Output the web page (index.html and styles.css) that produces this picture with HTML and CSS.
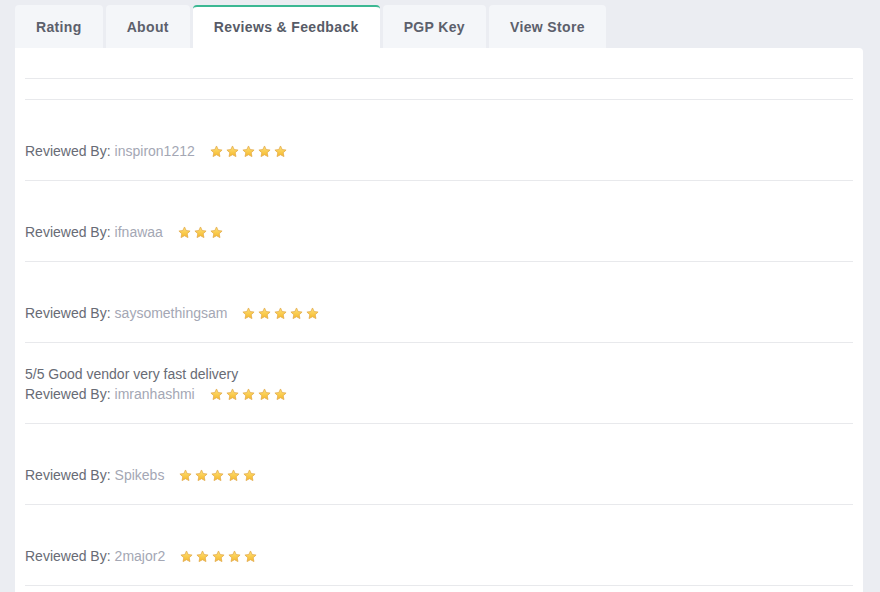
FILE: index.html
```html
<!DOCTYPE html>
<html>
<head>
<meta charset="utf-8">
<link rel="stylesheet" href="styles.css">
</head>
<body>
<svg width="0" height="0" class="defs">
  <defs>
    <linearGradient id="sg" x1="0" y1="0" x2="0" y2="1">
      <stop offset="0" stop-color="#ffe27a"/>
      <stop offset="1" stop-color="#f5b82a"/>
    </linearGradient>
    <symbol id="star" viewBox="0 0 24 24">
      <path d="M12 1.8l3.1 6.6 7.2.9-5.3 5 1.4 7.1L12 17.9l-6.4 3.5 1.4-7.1-5.3-5 7.2-.9z" fill="url(#sg)" stroke="#e2a94a" stroke-width="1.4" stroke-linejoin="round"/>
    </symbol>
  </defs>
</svg>
<div class="wrap">
  <div class="tabs">
    <div class="tab">Rating</div>
    <div class="tab">About</div>
    <div class="tab active">Reviews &amp; Feedback</div>
    <div class="tab">PGP Key</div>
    <div class="tab">View Store</div>
  </div>
  <div class="panel">
    <div class="head"></div>
    <div class="row empty"></div>
    <div class="review">
      <div class="comment">&nbsp;</div>
      <div class="by">Reviewed By: <span class="user">inspiron1212</span><span class="stars"><svg><use href="#star"/></svg><svg><use href="#star"/></svg><svg><use href="#star"/></svg><svg><use href="#star"/></svg><svg><use href="#star"/></svg></span></div>
    </div>
    <div class="review">
      <div class="comment">&nbsp;</div>
      <div class="by">Reviewed By: <span class="user">ifnawaa</span><span class="stars"><svg><use href="#star"/></svg><svg><use href="#star"/></svg><svg><use href="#star"/></svg></span></div>
    </div>
    <div class="review">
      <div class="comment">&nbsp;</div>
      <div class="by">Reviewed By: <span class="user">saysomethingsam</span><span class="stars"><svg><use href="#star"/></svg><svg><use href="#star"/></svg><svg><use href="#star"/></svg><svg><use href="#star"/></svg><svg><use href="#star"/></svg></span></div>
    </div>
    <div class="review">
      <div class="comment">5/5 Good vendor very fast delivery</div>
      <div class="by">Reviewed By: <span class="user">imranhashmi</span><span class="stars"><svg><use href="#star"/></svg><svg><use href="#star"/></svg><svg><use href="#star"/></svg><svg><use href="#star"/></svg><svg><use href="#star"/></svg></span></div>
    </div>
    <div class="review">
      <div class="comment">&nbsp;</div>
      <div class="by">Reviewed By: <span class="user">Spikebs</span><span class="stars"><svg><use href="#star"/></svg><svg><use href="#star"/></svg><svg><use href="#star"/></svg><svg><use href="#star"/></svg><svg><use href="#star"/></svg></span></div>
    </div>
    <div class="review">
      <div class="comment">&nbsp;</div>
      <div class="by">Reviewed By: <span class="user">2major2</span><span class="stars"><svg><use href="#star"/></svg><svg><use href="#star"/></svg><svg><use href="#star"/></svg><svg><use href="#star"/></svg><svg><use href="#star"/></svg></span></div>
    </div>
  </div>
</div>
</body>
</html>
```
FILE: styles.css
```css
* { box-sizing: border-box; }
html, body { margin: 0; padding: 0; }
body {
  background: #ebedf2;
  font-family: "Liberation Sans", Arial, sans-serif;
  overflow: hidden;
  height: 592px;
}
.defs { position: absolute; width: 0; height: 0; }
.wrap {
  padding: 5px 17px 0 15px;
}
.tabs {
  display: flex;
  gap: 3px;
}
.tab {
  height: 43px;
  padding: 0 21px;
  display: flex;
  align-items: center;
  background: #f4f6f9;
  border-radius: 4px 4px 0 0;
  font-weight: bold;
  font-size: 14px;
  letter-spacing: 0.35px;
  color: #5c606c;
}
.tab.active {
  background: #fff;
  border-top: 2px solid #3cb893;
  padding-bottom: 2px;
  color: #575b67;
}
.panel {
  background: #fff;
  border-radius: 0 4px 0 0;
  padding: 0 10px;
  min-height: 600px;
}
.head {
  height: 31px;
  border-bottom: 1px solid #e8e9ec;
}
.row.empty {
  height: 21px;
  border-bottom: 1px solid #e8e9ec;
}
.review {
  height: 81px;
  padding-top: 21px;
  border-bottom: 1px solid #e8e9ec;
  font-size: 14px;
  line-height: 20px;
  color: #686b75;
}
.by {
  display: flex;
  align-items: center;
}
.user {
  color: #a4a7b4;
  margin-left: 4px;
}
.stars {
  display: inline-flex;
  gap: 3px;
  margin-left: 15px;
}
.stars svg {
  width: 13px;
  height: 13px;
  display: block;
}
```
